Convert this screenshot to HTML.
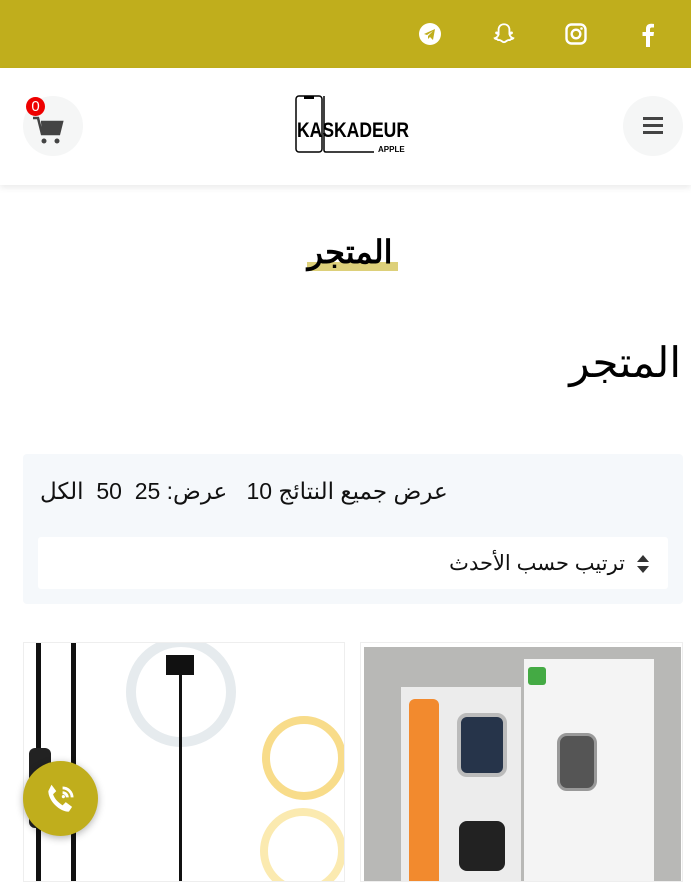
<!DOCTYPE html>
<html dir="rtl"><head><meta charset="utf-8"><style>
*{margin:0;padding:0;box-sizing:border-box}
body{width:691px;height:877px;overflow:hidden;background:#fff;font-family:"Liberation Sans","Noto Sans CJK SC",sans-serif;position:relative;direction:rtl}
.top{position:absolute;left:0;top:0;width:691px;height:68px;background:#c0ae1c}
.hdr{position:absolute;left:0;top:68px;width:691px;height:117px;background:#fff;box-shadow:0 3px 6px rgba(0,0,0,.08)}
.circ{position:absolute;width:60px;height:60px;border-radius:50%;background:#f5f6f6}
.abs{position:absolute}
</style></head><body>
<div class="top">
 <svg class="abs" style="left:418px;top:22px" width="24" height="24" viewBox="0 0 24 24"><circle cx="12" cy="12" r="11" fill="#fff"/><path d="M6 12l11-5-2 11-3-3-2 2v-3l5-5-6 4z" fill="#c0ae1c"/></svg>
 <svg class="abs" style="left:491px;top:21px" width="26" height="26" viewBox="0 0 24 24"><path d="M12 3c3 0 5 2 5 5v3l2-.5c.5 0 .6.6.1.9l-2 1c.5 2 2 3 3.5 3.5-.3.7-1.5.8-2.5 1-.3.9-1 .8-2 .7-1.5 0-2.5 2-4.1 2s-2.6-2-4.1-2c-1 .1-1.7.2-2-.7-1-.2-2.2-.3-2.5-1C5 15.4 6.5 14.4 7 12.4l-2-1c-.5-.3-.4-.9.1-.9L7 11V8c0-3 2-5 5-5z" fill="none" stroke="#fff" stroke-width="1.7"/></svg>
 <svg class="abs" style="left:565px;top:23px" width="22" height="22" viewBox="0 0 22 22"><rect x="1.5" y="1.5" width="19" height="19" rx="5" fill="none" stroke="#fff" stroke-width="2.4"/><circle cx="11" cy="11" r="4.3" fill="none" stroke="#fff" stroke-width="2.4"/><circle cx="16.5" cy="5.5" r="1.3" fill="#fff"/></svg>
 <svg class="abs" style="left:641px;top:22px" width="14" height="25" viewBox="0 0 14 25"><path d="M9 25V14h3.5l.5-4H9V7.5c0-1.2.4-2 2-2h2V2c-.5 0-1.7-.2-3-.2-3 0-5 1.8-5 5V10H1.5v4H5v11z" fill="#fff"/></svg>
</div>
<div class="hdr">
 <div class="circ" style="left:23px;top:28px"></div>
 <svg class="abs" style="left:32px;top:47px" width="34" height="30" viewBox="0 0 34 30"><path d="M1 3h5l4 16h17l3-12H9" fill="none" stroke="#444" stroke-width="2.5"/><path d="M9 7h21l-3 12H10z" fill="#444"/><circle cx="12" cy="26" r="2.5" fill="#444"/><circle cx="25" cy="26" r="2.5" fill="#444"/></svg>
 <div class="abs" style="left:26px;top:29px;width:19px;height:19px;border-radius:50%;background:#e00;color:#fff;font-size:15px;line-height:19px;text-align:center">0</div>
 <div class="circ" style="left:623px;top:28px"></div>
 <div class="abs" style="left:643px;top:49px;width:20px;height:3px;background:#444"></div>
 <div class="abs" style="left:643px;top:56px;width:20px;height:3px;background:#444"></div>
 <div class="abs" style="left:643px;top:63px;width:20px;height:3px;background:#444"></div>
 <svg class="abs" style="left:294px;top:26px" width="120" height="62" viewBox="0 0 120 62"><rect x="2" y="2" width="26" height="56" rx="3" fill="none" stroke="#000" stroke-width="1.5"/><rect x="10" y="2" width="10" height="3" fill="#000"/><path d="M30 2v54q0 2 2 2h48" fill="none" stroke="#000" stroke-width="1.5"/><text x="3" y="43" font-family="Liberation Sans Narrow, Liberation Sans" font-weight="bold" font-size="21" fill="#000" textLength="112" lengthAdjust="spacingAndGlyphs" direction="ltr">KASKADEUR</text><text x="84" y="58" font-family="Liberation Sans" font-weight="bold" font-size="8" fill="#000" direction="ltr">APPLE</text></svg>
</div>
<div class="abs" style="left:307px;top:262px;width:91px;height:9px;background:#ddd07a"></div>
<div class="abs" style="left:290px;top:233px;width:120px;text-align:center;font-size:32px;font-weight:bold;color:#000">المتجر</div>
<div class="abs" style="right:10px;top:338px;font-size:42px;color:#000">المتجر</div>
<div class="abs" style="left:23px;top:454px;width:660px;height:150px;background:#f5f8fb;border-radius:4px"></div>
<div class="abs" style="left:40px;top:478px;font-size:23px;color:#111;white-space:nowrap;direction:rtl">عرض جميع النتائج 10 &nbsp;&nbsp;عرض: 25 &nbsp;50 &nbsp;الكل</div>
<div class="abs" style="left:38px;top:537px;width:630px;height:52px;background:#fff;border-radius:3px"></div>
<div class="abs" style="right:66px;top:551px;font-size:21px;color:#111">ترتيب حسب الأحدث</div>
<svg class="abs" style="left:636px;top:554px" width="14" height="20" viewBox="0 0 14 20"><path d="M7 1l6 7H1zM7 19l6-7H1z" fill="#333"/></svg>
<div class="abs" style="left:23px;top:642px;width:322px;height:240px;border:1px solid #eee;background:#fff;overflow:hidden">
 <div class="abs" style="left:12px;top:0;width:5px;height:240px;background:#111"></div>
 <div class="abs" style="left:47px;top:0;width:5px;height:240px;background:#111"></div>
 <div class="abs" style="left:5px;top:105px;width:22px;height:80px;background:#222;border-radius:6px"></div>
 <div class="abs" style="left:102px;top:-6px;width:110px;height:110px;border-radius:50%;border:10px solid #e6ebee"></div>
 <div class="abs" style="left:155px;top:20px;width:3px;height:240px;background:#111"></div>
 <div class="abs" style="left:142px;top:12px;width:28px;height:20px;background:#111"></div>
 <div class="abs" style="left:238px;top:73px;width:84px;height:84px;border-radius:50%;border:8px solid #f8dc8a"></div>
 <div class="abs" style="left:236px;top:165px;width:86px;height:86px;border-radius:50%;border:8px solid #fbeab0"></div>
</div>
<div class="abs" style="left:360px;top:642px;width:323px;height:240px;border:1px solid #eee;background:#fff;overflow:hidden">
 <div class="abs" style="left:3px;top:4px;width:317px;height:240px;background:#b8b8b6"></div>
 <div class="abs" style="left:163px;top:16px;width:130px;height:230px;background:#f4f4f4"></div>
 <div class="abs" style="left:167px;top:24px;width:18px;height:18px;background:#4a4;border-radius:3px"></div>
 <div class="abs" style="left:196px;top:90px;width:40px;height:58px;background:#555;border:3px solid #999;border-radius:10px"></div>
 <div class="abs" style="left:40px;top:44px;width:120px;height:200px;background:#ececec"></div>
 <div class="abs" style="left:48px;top:56px;width:30px;height:190px;background:#f28a2e;border-radius:6px"></div>
 <div class="abs" style="left:96px;top:70px;width:50px;height:64px;background:#26344a;border:4px solid #bbb;border-radius:10px"></div>
 <div class="abs" style="left:98px;top:178px;width:46px;height:50px;background:#222;border-radius:8px"></div>
</div>
<div class="abs" style="left:23px;top:761px;width:75px;height:75px;border-radius:50%;background:#c0ae1c;box-shadow:0 2px 8px rgba(0,0,0,.3)"></div>
<svg class="abs" style="left:42px;top:780px" width="38" height="38" viewBox="0 0 24 24"><path d="M6 3l3 4-2 2c1 3 3 5 6 7l2-2 4 3-2 3c-6 0-13-7-13-13z" fill="#fff"/><path d="M13 8a3 3 0 013 3M13 5a6 6 0 016 6" fill="none" stroke="#fff" stroke-width="1.8"/><circle cx="13.5" cy="10.5" r="1" fill="#fff"/></svg>
</body></html>
